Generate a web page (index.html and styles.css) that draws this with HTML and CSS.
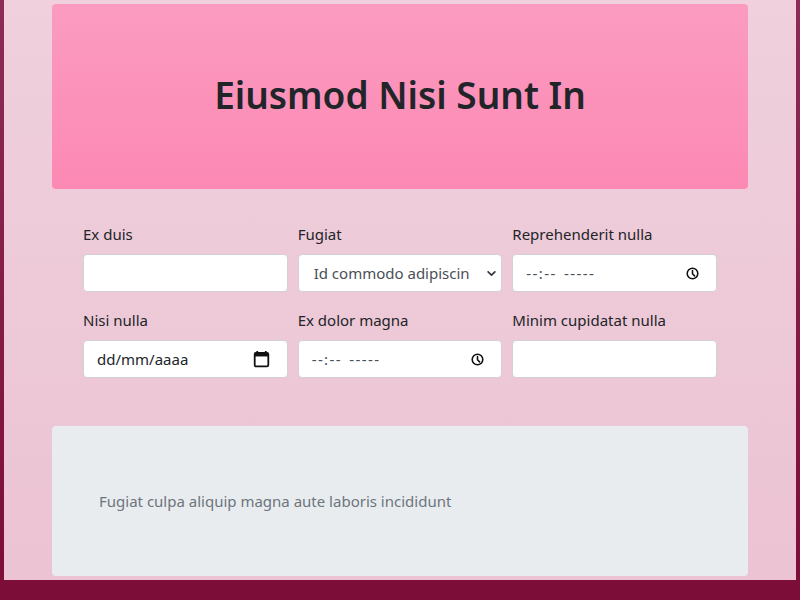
FILE: index.html
```html
<!DOCTYPE html>
<html lang="pt">
<head>
<meta charset="utf-8">
<title>Eiusmod Nisi Sunt In</title>
<link rel="stylesheet" href="styles.css">
</head>
<body>
<div class="page">
  <header class="hero">
    <h1 class="hero-title">Eiusmod Nisi Sunt In</h1>
  </header>

  <form class="form-grid">
    <div class="field">
      <label class="field-label">Ex duis</label>
      <div class="control"></div>
    </div>
    <div class="field">
      <label class="field-label">Fugiat</label>
      <div class="control control-select">
        <span class="control-text">Id commodo adipiscin</span>
        <svg class="chev" width="9" height="9" viewBox="0 0 16 16"><path d="M2 5l6 6 6-6" fill="none" stroke="#343a40" stroke-width="3" stroke-linecap="round" stroke-linejoin="round"/></svg>
      </div>
    </div>
    <div class="field">
      <label class="field-label">Reprehenderit nulla</label>
      <div class="control control-native">
        <span class="control-text time-text">--:-- -----</span>
        <svg class="clock" width="13" height="13" viewBox="0 0 14 14"><circle cx="7" cy="7" r="5.7" fill="none" stroke="#111" stroke-width="1.7"/><path d="M7 3.8V7.3l2.2 2.2" fill="none" stroke="#111" stroke-width="1.7" stroke-linecap="round"/></svg>
      </div>
    </div>
    <div class="field">
      <label class="field-label">Nisi nulla</label>
      <div class="control control-native">
        <span class="control-text">dd/mm/aaaa</span>
        <svg class="cal" width="17" height="18" viewBox="0 0 18 19"><path d="M4.5 1v3M13.5 1v3" stroke="#111" stroke-width="1.9"/><rect x="1.8" y="3" width="14.4" height="14.4" rx="1.5" fill="none" stroke="#111" stroke-width="1.9"/><rect x="1.8" y="3" width="14.4" height="3.8" fill="#111"/></svg>
      </div>
    </div>
    <div class="field">
      <label class="field-label">Ex dolor magna</label>
      <div class="control control-native">
        <span class="control-text time-text">--:-- -----</span>
        <svg class="clock" width="13" height="13" viewBox="0 0 14 14"><circle cx="7" cy="7" r="5.7" fill="none" stroke="#111" stroke-width="1.7"/><path d="M7 3.8V7.3l2.2 2.2" fill="none" stroke="#111" stroke-width="1.7" stroke-linecap="round"/></svg>
      </div>
    </div>
    <div class="field">
      <label class="field-label">Minim cupidatat nulla</label>
      <div class="control"></div>
    </div>
  </form>

  <section class="note">
    <p class="note-text">Fugiat culpa aliquip magna aute laboris incididunt</p>
  </section>
</div>
</body>
</html>
```

FILE: styles.css
```css
html, body {
  margin: 0;
  padding: 0;
}
body {
  background: linear-gradient(180deg, #8e2c55 0%, #7c0c38 100%);
  min-height: 600px;
  font-family: "Noto Sans", "Open Sans", sans-serif;
  color: #212529;
  overflow: hidden;
}
.page {
  margin: 0 4px;
  height: 580px;
  box-sizing: border-box;
  padding: 4px 48px;
  background: linear-gradient(180deg, #efd0dc 0%, #ecc3d3 100%);
  display: flex;
  flex-direction: column;
}
.hero {
  height: 185px;
  box-sizing: border-box;
  padding-bottom: 3px;
  border-radius: 4px;
  background: linear-gradient(180deg, #fb9bc0 0%, #fc89b3 100%);
  display: flex;
  align-items: center;
  justify-content: center;
}
.hero-title {
  margin: 0;
  font-size: 37px;
  font-weight: 600;
  line-height: 1.2;
  color: #212529;
}
.form-grid {
  margin: 33px 31px 0;
  display: grid;
  grid-template-columns: repeat(3, minmax(0, 1fr));
  column-gap: 10px;
  row-gap: 16px;
}
.field {
  display: flex;
  flex-direction: column;
  min-width: 0;
}
.field-label {
  font-size: 15px;
  line-height: 24px;
  margin-bottom: 8px;
  color: #212529;
}
.control {
  height: 38px;
  box-sizing: border-box;
  background: #fff;
  border: 1px solid #d3cfd6;
  border-radius: 4px;
  display: flex;
  align-items: center;
  font-size: 15px;
  color: #212529;
  overflow: hidden;
}
.control-select {
  padding: 0 5px 0 15px;
  color: #495057;
}
.control-select .control-text {
  flex: 1;
  min-width: 0;
  white-space: nowrap;
  margin-right: 10px;
}
.control-native {
  padding: 0 17px 0 13px;
  justify-content: space-between;
}
.time-text {
  letter-spacing: 1.4px;
  word-spacing: 2px;
  color: #495057;
}
.note {
  margin-top: 48px;
  height: 150px;
  border-radius: 4px;
  background: #e9ecef;
  display: flex;
  align-items: center;
  padding: 0 47px;
}
.note-text {
  margin: 0;
  font-size: 15px;
  color: #6c757d;
}
```
